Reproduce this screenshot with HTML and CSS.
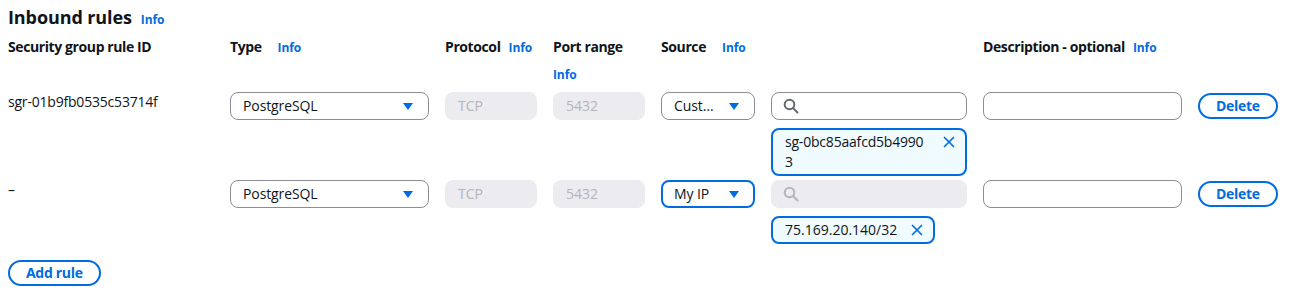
FILE: index.html
```html
<!DOCTYPE html>
<html lang="en">
<head>
<meta charset="utf-8">
<title>Inbound rules</title>
<link rel="stylesheet" href="styles.css">
</head>
<body>
<div class="page">
  <h2 class="title">Inbound rules <a class="info">Info</a></h2>

  <div class="grid head">
    <div class="hcell"><span class="label">Security group rule ID</span></div>
    <div class="hcell wide"><span class="label">Type</span><a class="info">Info</a></div>
    <div class="hcell"><span class="label">Protocol</span><a class="info">Info</a></div>
    <div class="hcell wrap"><span class="label">Port range</span><a class="info">Info</a></div>
    <div class="hcell wide span2"><span class="label">Source</span><a class="info">Info</a></div>
    <div class="hcell"><span class="label">Description - optional</span><a class="info">Info</a></div>
    <div class="hcell"></div>
  </div>

  <div class="grid row">
    <div class="idtext">sgr-01b9fb0535c53714f</div>
    <div class="select"><span class="val">PostgreSQL</span><svg class="caret" viewBox="0 0 16 16"><path d="M3 5h10l-5 7z"/></svg></div>
    <div class="field disabled">TCP</div>
    <div class="field disabled">5432</div>
    <div class="select"><span class="val">Cust…</span><svg class="caret" viewBox="0 0 16 16"><path d="M3 5h10l-5 7z"/></svg></div>
    <div class="multi">
      <div class="search"><svg class="sicon" viewBox="0 0 16 16"><circle cx="6.5" cy="6.5" r="4.8"/><path d="M10 10l4.5 4.5"/></svg></div>
      <div class="token full"><span class="ttext">sg-0bc85aafcd5b49903</span><svg class="xicon" viewBox="0 0 16 16"><path d="M2 2l12 12M14 2L2 14"/></svg></div>
    </div>
    <div class="field"></div>
    <div><button class="btn">Delete</button></div>
  </div>

  <div class="grid row">
    <div class="idtext">–</div>
    <div class="select"><span class="val">PostgreSQL</span><svg class="caret" viewBox="0 0 16 16"><path d="M3 5h10l-5 7z"/></svg></div>
    <div class="field disabled">TCP</div>
    <div class="field disabled">5432</div>
    <div class="select focused"><span class="val">My IP</span><svg class="caret" viewBox="0 0 16 16"><path d="M3 5h10l-5 7z"/></svg></div>
    <div class="multi">
      <div class="search disabled"><svg class="sicon" viewBox="0 0 16 16"><circle cx="6.5" cy="6.5" r="4.8"/><path d="M10 10l4.5 4.5"/></svg></div>
      <div class="tokens"><div class="token"><span class="ttext ip">75.169.20.140/32</span><svg class="xicon" viewBox="0 0 16 16"><path d="M2 2l12 12M14 2L2 14"/></svg></div></div>
    </div>
    <div class="field"></div>
    <div><button class="btn">Delete</button></div>
  </div>

  <div class="actions"><button class="btn">Add rule</button></div>
</div>
</body>
</html>
```

FILE: styles.css
```css
* { box-sizing: border-box; }
html, body { margin: 0; padding: 0; background: #ffffff; }
body {
  font-family: "Open Sans", "Noto Sans", Arial, sans-serif;
  font-size: 14px;
  color: #0f141a;
}
.page { padding: 6px 8px 8px 8px; }

.title {
  margin: 0;
  font-size: 18px;
  line-height: 22px;
  font-weight: 700;
  letter-spacing: -0.1px;
  display: flex;
  align-items: baseline;
  gap: 9px;
}
.info {
  font-size: 12px;
  font-weight: 700;
  color: #006ce0;
  letter-spacing: -0.1px;
  line-height: 18px;
}

.grid {
  display: grid;
  grid-template-columns: 206px 199px 92px 92px 94px 196px 199px auto;
  column-gap: 16px;
  align-items: start;
}
.head { margin-top: 9px; margin-bottom: 8px; }
.hcell {
  display: flex;
  flex-wrap: wrap;
  align-items: baseline;
  column-gap: 8px;
  row-gap: 10px;
  line-height: 18px;
}
.hcell.wide { column-gap: 16px; }
.hcell.span2 { grid-column: span 2; }
.label { font-weight: 700; letter-spacing: -0.4px; }

.row + .row { margin-top: 4px; }

.idtext { line-height: 20px; letter-spacing: -0.2px; }

.select, .field, .search {
  height: 28px;
  border: 1px solid #8c8c94;
  border-radius: 8px;
  background: #ffffff;
  display: flex;
  align-items: center;
  padding: 0 12px;
  line-height: 20px;
}
.select { justify-content: space-between; padding-right: 12px; }
.select.focused { border: 2px solid #006ce0; padding: 0 11px; }
.val { letter-spacing: -0.1px; }
.caret { width: 16px; height: 16px; fill: #006ce0; flex: none; }

.field.disabled, .search.disabled {
  background: #ebebf0;
  border-color: #ebebf0;
  color: #b4b4bb;
}

.multi { display: flex; flex-direction: column; gap: 8px; }
.search { padding-left: 11px; }
.sicon {
  width: 16px; height: 16px;
  fill: none; stroke: #656871; stroke-width: 2; stroke-linecap: round;
}
.search.disabled .sicon { stroke: #b4b4bb; }

.tokens { display: flex; }
.token {
  display: flex;
  align-items: flex-start;
  gap: 14px;
  border: 2px solid #006ce0;
  border-radius: 8px;
  background: #f0fbff;
  padding: 2px 10px 2px 12px;
  line-height: 20px;
}
.token.full { width: 100%; }
.ttext { flex: 1; word-break: break-all; letter-spacing: -0.2px; }
.ttext.ip { letter-spacing: 0; }
.xicon {
  width: 12px; height: 12px; margin-top: 4px; flex: none;
  fill: none; stroke: #006ce0; stroke-width: 2.2; stroke-linecap: round;
}

.btn {
  font-family: inherit;
  font-size: 14px;
  font-weight: 700;
  letter-spacing: -0.3px;
  color: #006ce0;
  background: #ffffff;
  border: 2px solid #006ce0;
  border-radius: 20px;
  height: 26px;
  padding: 0 16px;
  line-height: 20px;
  cursor: pointer;
}
.row .btn { margin-top: 1px; }
.actions { margin-top: 16px; }
```
